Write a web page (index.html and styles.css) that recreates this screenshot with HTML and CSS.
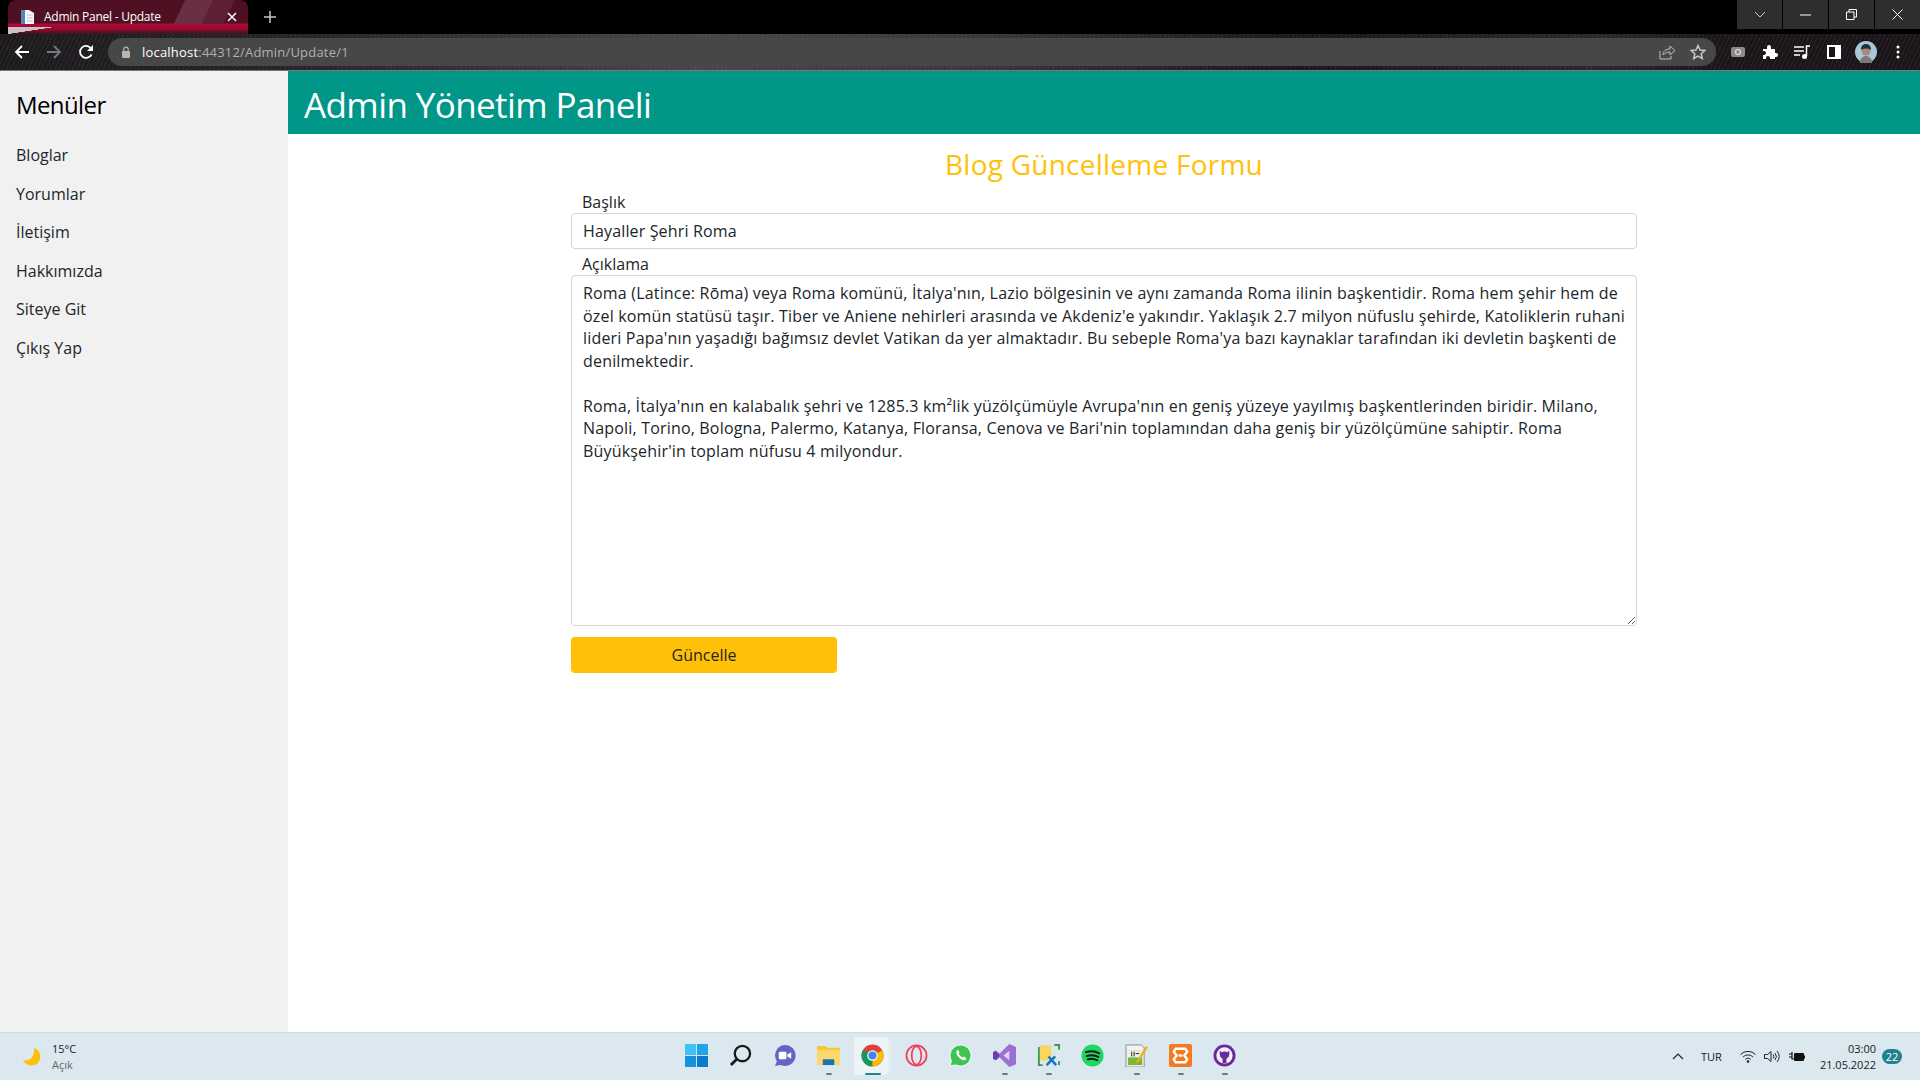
FILE: index.html
```html
<!DOCTYPE html>
<html lang="tr">
<head>
  <meta charset="UTF-8">
  <title>Admin Panel - Update</title>
  <link rel="stylesheet" href="styles.css">
</head>
<body>
  <!-- Tarayıcı üst kısmı -->
  <div class="tabstrip">
    <div class="tab">
      <svg class="tab-icon" width="16" height="16" viewBox="0 0 16 16"><path d="M1 1h8l5 3v11H1z" fill="#f4f6f8"/><path d="M1 1h4v14H1z" fill="#4d86b8"/><path d="M7 6h6M7 9h6M7 12h6" stroke="#b9c2cb"/></svg>
      <span class="tab-title">Admin Panel - Update</span>
      <svg class="tab-close" width="10" height="10" viewBox="0 0 10 10"><path d="M1 1l8 8M9 1l-8 8" stroke="#fff" stroke-width="1.5"/></svg>
    </div>
    <svg class="new-tab" width="12" height="12" viewBox="0 0 12 12"><path d="M6 0v12M0 6h12" stroke="#c4c7c5" stroke-width="1.5"/></svg>
    <div class="window-buttons">
      <div class="win-btn"><svg width="12" height="8" viewBox="0 0 12 8"><path d="M1 1l5 5 5-5" fill="none" stroke="#ccc"/></svg></div>
      <div class="win-btn"><svg width="11" height="2" viewBox="0 0 11 2"><path d="M0 1h11" stroke="#fff"/></svg></div>
      <div class="win-btn"><svg width="11" height="11" viewBox="0 0 11 11"><path d="M.5 3h7.500v7.500H.5zM3 3V.5h7.500V8H8" fill="none" stroke="#fff"/></svg></div>
      <div class="win-btn"><svg width="11" height="11" viewBox="0 0 11 11"><path d="M.5.5l10 10M10.500.5l-10 10" stroke="#fff"/></svg></div>
    </div>
  </div>
  <div class="toolbar">
    <div class="nav-btn"><svg width="16" height="16" viewBox="0 0 16 16"><path d="M15 8H2M8 2L2 8l6 6" fill="none" stroke="#fff" stroke-width="1.800"/></svg></div>
    <div class="nav-btn"><svg width="16" height="16" viewBox="0 0 16 16"><path d="M1 8h13M8 2l6 6-6 6" fill="none" stroke="#77767a" stroke-width="1.800"/></svg></div>
    <div class="nav-btn"><svg width="16" height="16" viewBox="0 0 16 16"><path d="M13.500 10.500A6 6 0 1 1 13 4.500" fill="none" stroke="#fff" stroke-width="1.800"/><path d="M15 1v6H9z" fill="#fff"/></svg></div>
    <div class="omnibox">
      <svg class="lock" width="10" height="12" viewBox="0 0 10 12"><rect x="1" y="5" width="8" height="7" rx="1" fill="#b5b5b5"/><path d="M2.800 5V3.300a2.200 2.200 0 0 1 4.400 0V5" fill="none" stroke="#b5b5b5" stroke-width="1.200"/></svg>
      <span class="url"><b>localhost</b>:44312/Admin/Update/1</span>
      <svg class="omni-icon" width="16" height="16" viewBox="0 0 16 16"><path d="M1 7v8h11v-3" fill="none" stroke="#c0c0c0"/><path d="M4 11c0-4 3-6 7-6V2l5 4.500-5 4.500V8c-3 0-5 1-7 3z" fill="none" stroke="#c0c0c0"/></svg>
      <svg class="omni-icon star" width="16" height="16" viewBox="0 0 16 16"><path d="M8 1.500l2 4.500 4.900.5-3.700 3.200 1.100 4.800L8 12l-4.300 2.500 1.100-4.800L1.100 6.500 6 6z" fill="none" stroke="#c8c8c8" stroke-width="1.500"/></svg>
    </div>
    <div class="tool-btn"><svg width="14" height="10" viewBox="0 0 14 10"><rect width="14" height="10" rx="2" fill="#8a8a8a"/><circle cx="7" cy="5" r="2.500" fill="none" stroke="#ddd" stroke-width="1.200"/></svg></div>
    <div class="tool-btn"><svg width="16" height="16" viewBox="0 0 16 16"><path d="M1 5h4V3a2 2 0 0 1 4 0v2h4v4h1a2 2 0 0 1 0 4h-1v2H8v-1a2 2 0 0 0-4 0v1H1v-4h1a2 2 0 0 0 0-4H1z" fill="#fff"/></svg></div>
    <div class="tool-btn"><svg width="16" height="14" viewBox="0 0 16 14"><path d="M0 2h10M0 6h10M0 10h6" stroke="#fff" stroke-width="1.500"/><path d="M12.500 11V1H16" fill="none" stroke="#fff" stroke-width="1.500"/><circle cx="10.500" cy="11.500" r="2.500" fill="#fff"/></svg></div>
    <div class="tool-btn"><svg width="14" height="14" viewBox="0 0 14 14"><rect width="14" height="14" fill="#fff"/><rect x="2" y="2" width="6" height="10" fill="#1b1418"/></svg></div>
    <div class="tool-btn"><svg width="22" height="22" viewBox="0 0 22 22"><circle cx="11" cy="11" r="11" fill="#a9c8d6"/><path d="M5 22c0-5 3-7 6-7s6 2 6 7z" fill="#7c7a78"/><circle cx="11" cy="10" r="4.500" fill="#a98a76"/><path d="M6 9c0-4 2-6 5-6s5 2 5 6c-2-2-8-2-10 0z" fill="#1f3040"/></svg></div>
    <div class="tool-btn"><svg width="4" height="14" viewBox="0 0 4 14"><circle cx="2" cy="2" r="1.500" fill="#fff"/><circle cx="2" cy="7" r="1.500" fill="#fff"/><circle cx="2" cy="12" r="1.500" fill="#fff"/></svg></div>
  </div>

  <!-- Sayfa -->
  <div class="page">
    <div class="sidebar">
      <h3 class="sidebar-title">Menüler</h3>
      <a class="menu-link">Bloglar</a>
      <a class="menu-link">Yorumlar</a>
      <a class="menu-link">İletişim</a>
      <a class="menu-link">Hakkımızda</a>
      <a class="menu-link">Siteye Git</a>
      <a class="menu-link">Çıkış Yap</a>
    </div>
    <div class="main">
      <div class="main-header"><h1>Admin Yönetim Paneli</h1></div>
      <div class="form-wrap">
        <h2 class="form-title">Blog Güncelleme Formu</h2>
        <label class="form-label">Başlık</label>
        <input class="form-input" type="text" value="Hayaller Şehri Roma">
        <label class="form-label label-second">Açıklama</label>
        <textarea class="form-input form-area" spellcheck="false">Roma (Latince: Rōma) veya Roma komünü, İtalya'nın, Lazio bölgesinin ve aynı zamanda Roma ilinin başkentidir. Roma hem şehir hem de özel komün statüsü taşır. Tiber ve Aniene nehirleri arasında ve Akdeniz'e yakındır. Yaklaşık 2.7 milyon nüfuslu şehirde, Katoliklerin ruhani lideri Papa'nın yaşadığı bağımsız devlet Vatikan da yer almaktadır. Bu sebeple Roma'ya bazı kaynaklar tarafından iki devletin başkenti de denilmektedir.

Roma, İtalya'nın en kalabalık şehri ve 1285.3 km²lik yüzölçümüyle Avrupa'nın en geniş yüzeye yayılmış başkentlerinden biridir. Milano, Napoli, Torino, Bologna, Palermo, Katanya, Floransa, Cenova ve Bari'nin toplamından daha geniş bir yüzölçümüne sahiptir. Roma Büyükşehir'in toplam nüfusu 4 milyondur.</textarea>
        <button class="submit-btn">Güncelle</button>
      </div>
    </div>
  </div>

  <!-- Görev çubuğu -->
  <div class="taskbar">
    <div class="weather">
      <svg width="20" height="20" viewBox="0 0 20 20"><path d="M12 1a9 9 0 1 1-11 12c6 2 12-3 11-12z" fill="#fdc10d"/></svg>
      <div class="weather-text"><span>15°C</span><span class="weather-sub">Açık</span></div>
    </div>
    <div class="task-icons">
      <div class="task-icon"><svg viewBox="0 0 24 24"><rect width="11.500" height="11.500" fill="#3cc4f4"/><rect x="12.500" width="11.500" height="11.500" fill="#20a6e8"/><rect y="12.500" width="11.500" height="11.500" fill="#1493dd"/><rect x="12.500" y="12.500" width="11.500" height="11.500" fill="#0b7bd0"/></svg></div>
      <div class="task-icon"><svg viewBox="0 0 24 24"><circle cx="14" cy="10" r="8" fill="none" stroke="#1a1a1a" stroke-width="2.400"/><path d="M8 16l-6 6" stroke="#1a1a1a" stroke-width="3"/></svg></div>
      <div class="task-icon"><svg viewBox="0 0 24 24"><path d="M12 1a11 11 0 1 1-4 21l-6 1 2-5A11 11 0 0 1 12 1z" fill="#6264c6"/><rect x="6" y="8" width="8" height="8" rx="1.500" fill="#fff"/><path d="M15 11l4-2.500v7L15 13z" fill="#fff"/></svg></div>
      <div class="task-icon running"><svg viewBox="0 0 24 22"><path d="M0 2a1 1 0 0 1 1-1h8l2 2h12a1 1 0 0 1 1 1v17H0z" fill="#f7c52e"/><path d="M0 5h24v16H0z" fill="#fcd86a"/><path d="M7 15h10a1 1 0 0 1 1 1v5H6v-5a1 1 0 0 1 1-1z" fill="#1673b8"/></svg></div>
      <div class="task-icon active">
        <svg viewBox="0 0 24 24"><circle cx="12" cy="12" r="11.500" fill="#db4437"/><path d="M12 12L22 6.500A11.500 11.500 0 0 1 12 23.500z" fill="#fbbc05"/><path d="M12 12l-1 11.500A11.500 11.500 0 0 1 2 6.500z" fill="#0f9d58"/><circle cx="12" cy="12" r="5.500" fill="#fff"/><circle cx="12" cy="12" r="4.300" fill="#4285f4"/></svg>
      </div>
      <div class="task-icon"><svg viewBox="0 0 24 24"><circle cx="12" cy="12" r="10.500" fill="none" stroke="#f0405f" stroke-width="1.800"/><ellipse cx="12" cy="12" rx="5" ry="9.500" fill="none" stroke="#f0405f" stroke-width="1.800"/></svg></div>
      <div class="task-icon"><svg viewBox="0 0 24 24"><path d="M12 1a11 11 0 1 1-5 20.800L1 23l1.500-5.500A11 11 0 0 1 12 1z" fill="#40c351" stroke="#fff"/><path d="M8 7c-1 2 0 5 3 7.500s5 3 6.500 2l.5-2-3-1.500-1 1c-2-1-3-2-4-4l1-1L9.500 6z" fill="#fff"/></svg></div>
      <div class="task-icon running"><svg viewBox="0 0 24 24"><path d="M17 0l7 3v18l-7 3-10-10-4 3-3-1.500v-7L3 7l4 3z" fill="#9a6fd6"/><path d="M17 7l-6 5 6 5z" fill="#fff" opacity=".7"/><path d="M0 8.500l3-1.500 4 5-4 5-3-1.500z" fill="#6a3fb0"/></svg></div>
      <div class="task-icon running"><svg viewBox="0 0 24 24"><path d="M2 3v19h4M18 1h5v5M23 18v4" fill="none" stroke="#3f9a4b" stroke-width="2"/><path d="M3 3a6 2 0 0 1 12 0v14H3z" fill="#f8d85c"/><path d="M10 22l9-9M12 13l8 9" stroke="#1573c5" stroke-width="2.600"/></svg></div>
      <div class="task-icon"><svg viewBox="0 0 24 24"><circle cx="12" cy="12" r="11.500" fill="#1ed760"/><path d="M5 8.500c5-1.500 10-1 14 1.200M6 12.500c4-1 9-.8 12 1M7 16c3-.8 7-.6 10 1" fill="none" stroke="#15191c" stroke-width="2" stroke-linecap="round"/></svg></div>
      <div class="task-icon running"><svg viewBox="0 0 24 24"><path d="M1 1h16l3 3v20H1z" fill="#f4f4ee" stroke="#8a8a8a"/><path d="M3 7h15v15H3z" fill="#7cb53c"/><path d="M3 7h15v7H3z" fill="#eef2e4"/><path d="M7 8v5M9.500 8v5M11 10h4" stroke="#222"/><path d="M12 18L22 2l2 1.500L14 19l-3 1z" fill="#f2b01e"/></svg></div>
      <div class="task-icon running"><svg viewBox="0 0 24 24"><rect width="24" height="24" rx="2" fill="#f27b21"/><path d="M7 5h10l2 3-3 4 3 4-2 3H7l-2-3 3-4-3-4z" fill="none" stroke="#fff" stroke-width="2.500"/><path d="M10 12h4" stroke="#fff" stroke-width="2.500"/></svg></div>
      <div class="task-icon running"><svg viewBox="0 0 24 24"><circle cx="12" cy="12" r="11.500" fill="#6a2a9c"/><circle cx="12" cy="12" r="8.500" fill="#f3eef7"/><path d="M7 7l2 1.500a8 8 0 0 1 6 0L17 7v4a5 5 0 0 1-3 4.500V20h-4v-4.500A5 5 0 0 1 7 11z" fill="#6a2a9c"/></svg></div>
    </div>
    <div class="tray">
      <svg class="tray-chevron" width="12" height="7" viewBox="0 0 12 7"><path d="M1 6l5-5 5 5" fill="none" stroke="#222" stroke-width="1.200"/></svg>
      <span class="tray-lang">TUR</span>
      <svg class="tray-wifi" width="16" height="13" viewBox="0 0 16 13"><path d="M.5 4.500a10.500 10.500 0 0 1 15 0M3 7a7 7 0 0 1 10 0M5.300 9.300a3.800 3.800 0 0 1 5.400 0" fill="none" stroke="#222"/><circle cx="8" cy="11.500" r="1.300" fill="#222"/></svg>
      <svg class="tray-sound" width="16" height="13" viewBox="0 0 16 13"><path d="M.5 4.500h3L7 1.500v10L3.500 8.500h-3z" fill="none" stroke="#222"/><path d="M9 4.500a3 3 0 0 1 0 4M11 3a5.500 5.500 0 0 1 0 7M13 1a8 8 0 0 1 0 11" fill="none" stroke="#222"/></svg>
      <svg class="tray-battery" width="16" height="12" viewBox="0 0 16 12"><path d="M0 3h3M0 6h3M3 1v7h2" fill="none" stroke="#111" stroke-width="1.200"/><rect x="5" y="2" width="10" height="8" rx="1" fill="#111"/><rect x="15" y="4.500" width="1" height="3" fill="#111"/></svg>
      <div class="clock"><span>03:00</span><span>21.05.2022</span></div>
      <span class="notif">22</span>
    </div>
  </div>
</body>
</html>
```

FILE: styles.css
```css
/* Genel */
html, body {
  height: 100%;
}

body {
  margin: 0;
  display: flex;
  flex-direction: column;
  height: 1080px;
  overflow: hidden;
  font-family: 'Open Sans', 'Noto Sans', sans-serif;
  color: #212529;
  background-color: white;
}

/* Sekme satırı */
.tabstrip {
  height: 34px;
  flex-shrink: 0;
  display: flex;
  align-items: flex-start;
  background-color: black;
}

.tab {
  width: 240px;
  height: 34px;
  margin-left: 8px;
  padding: 0 12px;
  box-sizing: border-box;
  display: flex;
  align-items: center;
  border-radius: 8px 8px 0 0;
  background:
    linear-gradient(to bottom right, #cdbfc3 50%, transparent 51%) 0 27px / 46px 7px no-repeat,
    linear-gradient(115deg, transparent 0 160px, #6a2f45 161px 185px, #5c1f35 186px 205px, transparent 206px) 0 0 / 100% 24px no-repeat,
    linear-gradient(180deg, #4f1024 0, #4f1024 23px, #b10a34 24px, #8c0a2e 30px, #2c1a22 34px);
}

.tab-icon {
  margin-right: 8px;
}

.tab-title {
  flex: 1;
  margin-top: -1px;
  font-size: 12px;
  letter-spacing: -0.25px;
  color: white;
}

.tab-close {
  margin-right: -1px;
}

.new-tab {
  margin: 11px 0 0 16px;
}

.window-buttons {
  margin-left: auto;
  display: flex;
  gap: 1px;
}

.win-btn {
  width: 45px;
  height: 29px;
  display: flex;
  align-items: center;
  justify-content: center;
  background-color: #2e2e2e;
}

/* Adres satırı */
.toolbar {
  height: 37px;
  flex-shrink: 0;
  box-sizing: border-box;
  padding: 4px 6px 4px;
  display: flex;
  align-items: center;
  background:
    repeating-linear-gradient(115deg, rgba(255, 255, 255, 0.06) 0 1px, transparent 1px 4px),
    linear-gradient(90deg, #1d1a1e 0, #262227 300px, #4a4247 700px, #3d353a 960px, #1b1519 1300px, #2c262a 1600px, #1b1519 1720px);
  border-bottom: 1px solid #777;
}

.nav-btn {
  width: 32px;
  display: flex;
  justify-content: center;
}

.omnibox {
  width: 1608px;
  height: 28px;
  margin: 0 6px 0 6px;
  padding: 0 10px 0 13px;
  box-sizing: border-box;
  display: flex;
  align-items: center;
  border-radius: 14px;
  background-color: #474747;
}

.url {
  flex: 1;
  margin-left: 11px;
  font-size: 13px;
  letter-spacing: 0.2px;
  color: #b0b0b0;
}

.url b {
  font-weight: 400;
  color: white;
}

.omni-icon {
  margin-left: 15px;
}

.tool-btn {
  width: 32px;
  display: flex;
  justify-content: center;
}

/* Sayfa */
.page {
  flex: 1;
  min-height: 0;
  display: flex;
}

.sidebar {
  width: 288px;
  flex-shrink: 0;
  padding: 16px 16px 0;
  box-sizing: border-box;
  background-color: #f1f1f1;
  display: flex;
  flex-direction: column;
}

.sidebar-title {
  margin: 0 0 13px;
  font-size: 24px;
  font-weight: 400;
  line-height: 36px;
  letter-spacing: -0.6px;
  color: black;
}

.menu-link {
  height: 38.500px;
  line-height: 38.500px;
  font-size: 16px;
  color: #212529;
}

.main {
  flex: 1;
}

.main-header {
  height: 63px;
  padding: 0 16px;
  background-color: #009688;
  display: flex;
  align-items: center;
}

.main-header h1 {
  margin: 3px 0 0;
  font-size: 35px;
  font-weight: 400;
  letter-spacing: -0.6px;
  color: white;
}

/* Form */
.form-wrap {
  width: 1066px;
  margin: 0 auto;
  display: flex;
  flex-direction: column;
  align-items: flex-start;
}

.form-title {
  width: 100%;
  margin: 11px 0 0;
  height: 39px;
  line-height: 39px;
  text-align: center;
  font-size: 28px;
  font-weight: 400;
  letter-spacing: 0.24px;
  color: #ffc107;
}

.form-label {
  margin: 8px 0 0 11px;
  height: 21px;
  line-height: 21px;
  font-size: 16px;
}

.label-second {
  margin-top: 5px;
}

.form-input {
  width: 100%;
  height: 36px;
  padding: 6px 11px;
  box-sizing: border-box;
  border: 1px solid #ced4da;
  border-radius: 4px;
  font-family: inherit;
  font-size: 16px;
  letter-spacing: 0.15px;
  line-height: 22.500px;
  color: #212529;
  outline: none;
}

.form-area {
  height: 351px;
  padding-right: 8px;
  letter-spacing: 0.18px;
}

.submit-btn {
  width: 266px;
  height: 36px;
  margin-top: 11px;
  border: none;
  border-radius: 4px;
  background-color: #ffc107;
  font-family: inherit;
  font-size: 16px;
  color: #212529;
}

/* Görev çubuğu */
.taskbar {
  height: 48px;
  flex-shrink: 0;
  box-sizing: border-box;
  display: flex;
  align-items: center;
  justify-content: space-between;
  border-top: 1px solid #cfdbe2;
  background-color: #dbe8ef;
  color: #1a1a1a;
}

.weather {
  width: 300px;
  padding-left: 22px;
  box-sizing: border-box;
  display: flex;
  align-items: center;
  gap: 10px;
}

.weather-text {
  display: flex;
  flex-direction: column;
  font-size: 11px;
  line-height: 16px;
}

.weather-sub {
  color: #666;
}

.task-icons {
  display: flex;
  margin: 0 0 2px 1px;
}

.task-icon {
  width: 44px;
  height: 44px;
  position: relative;
  display: flex;
  align-items: center;
  justify-content: center;
}

.task-icon svg {
  position: relative;
  width: 23px;
  height: 23px;
}

.task-icon.running::after,
.task-icon.active::after {
  content: "";
  position: absolute;
  left: 19px;
  bottom: 3px;
  width: 6px;
  height: 2px;
  border-radius: 2px;
  background-color: #6d7a82;
}

.task-icon.active::before {
  content: "";
  position: absolute;
  left: 3px;
  top: 3px;
  width: 34px;
  height: 38px;
  border-radius: 4px;
  background-color: #ecf4f8;
  box-shadow: 4px 0 0 -1px #e4eef3;
}

.task-icon.active::after {
  left: 14px;
  width: 16px;
  background-color: #2b7f8f;
}

.tray {
  width: 300px;
  box-sizing: border-box;
  display: flex;
  align-items: center;
  justify-content: flex-end;
  padding-right: 18px;
}

.tray-chevron {
  margin-right: 17.500px;
}

.tray-lang {
  margin-right: 18.500px;
  font-size: 11px;
}

.tray-wifi {
  margin-right: 8px;
}

.tray-sound {
  margin-right: 9px;
}

.tray-battery {
  margin-right: 14.500px;
}

.clock {
  display: flex;
  flex-direction: column;
  align-items: flex-end;
  font-size: 11px;
  line-height: 16px;
}

.notif {
  width: 20px;
  height: 15px;
  margin-left: 6px;
  border-radius: 8px;
  background-color: #1f8191;
  color: white;
  font-size: 11px;
  line-height: 15px;
  text-align: center;
}
```
